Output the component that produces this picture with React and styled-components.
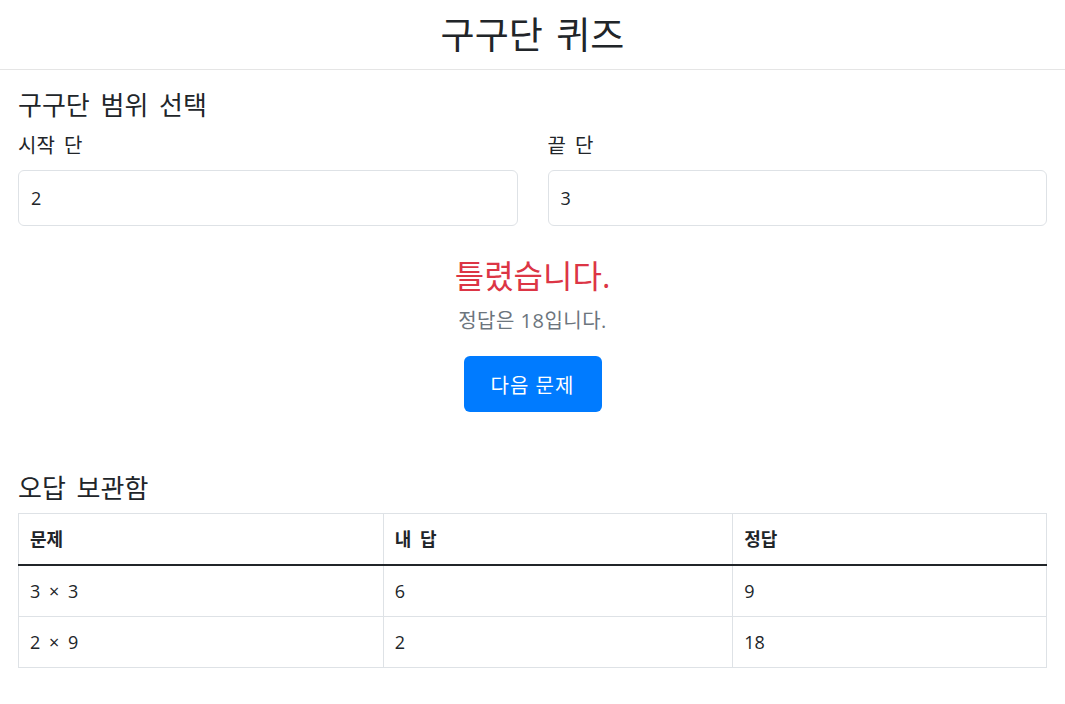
import React, { useState } from "react"
import styled, { createGlobalStyle } from "styled-components"

const GlobalStyle = createGlobalStyle`
  body {
    margin: 0;
    background: #fff;
    color: #212529;
    font-family: "Open Sans", "Noto Sans CJK KR", sans-serif;
    word-spacing: 0.25em;
  }
  * { box-sizing: border-box; }
`

const Header = styled.header`
  height: 70px;
  border-bottom: 1px solid #e5e5e5;
  display: flex;
  align-items: center;
  justify-content: center;
`
const Title = styled.h1`
  margin: 0;
  font-size: 37px;
  font-weight: 400;
  line-height: 40px;
`
const Main = styled.main`
  padding: 0 18px;
  display: flex;
  flex-direction: column;
`
const SectionTitle = styled.h2`
  margin: ${(p) => p.$top || 20}px 0 0;
  font-size: 26px;
  font-weight: 400;
  line-height: 30px;
`
const RangeGrid = styled.div`
  display: grid;
  grid-template-columns: 1fr 1fr;
  column-gap: 30px;
  margin-top: 12px;
`
const Field = styled.label`
  display: flex;
  flex-direction: column;
  gap: 10px;
  font-size: 20px;
  line-height: 28px;
`
const Input = styled.input`
  height: 56px;
  padding: 0 12px;
  border: 1px solid #dee2e6;
  border-radius: 6px;
  font: inherit;
  font-size: 18px;
  color: #212529;
  outline: none;
`
const Feedback = styled.div`
  display: flex;
  flex-direction: column;
  align-items: center;
  margin-top: 32px;
`
const Verdict = styled.div`
  font-size: 32px;
  line-height: 36px;
  color: #dc3545;
`
const Answer = styled.div`
  margin-top: 13px;
  font-size: 20px;
  line-height: 27px;
  letter-spacing: 0.5px;
  word-spacing: normal;
  color: #6c757d;
`
const NextButton = styled.button`
  margin-top: 22px;
  width: 138px;
  height: 56px;
  border: none;
  border-radius: 6px;
  background: #007bff;
  color: #fff;
  font: inherit;
  font-size: 20px;
  letter-spacing: 1px;
  cursor: pointer;
`
const Table = styled.table`
  margin-top: 10px;
  width: 100%;
  border-collapse: collapse;
  font-size: 18px;
  line-height: 26px;
`
const Th = styled.th`
  width: ${(p) => p.$w}px;
  text-align: left;
  font-weight: 700;
  padding: 12px 11px;
  border: 1px solid #dee2e6;
  border-bottom: 2px solid #212529;
`
const Td = styled.td`
  padding: 12px 11px;
  border: 1px solid #dee2e6;
`

const wrongs = [
  { q: "3 × 3", mine: 6, answer: 9 },
  { q: "2 × 9", mine: 2, answer: 18 },
]

const App = () => {
  const [start, setStart] = useState("2")
  const [end, setEnd] = useState("3")
  return (
    <>
      <GlobalStyle />
      <Header>
        <Title>구구단 퀴즈</Title>
      </Header>
      <Main>
        <SectionTitle>구구단 범위 선택</SectionTitle>
        <RangeGrid>
          <Field>
            시작 단
            <Input value={start} onChange={(e) => setStart(e.target.value)} />
          </Field>
          <Field>
            끝 단
            <Input value={end} onChange={(e) => setEnd(e.target.value)} />
          </Field>
        </RangeGrid>
        <Feedback>
          <Verdict>틀렸습니다.</Verdict>
          <Answer>정답은 18입니다.</Answer>
          <NextButton>다음 문제</NextButton>
        </Feedback>
        <SectionTitle $top={61}>오답 보관함</SectionTitle>
        <Table>
          <thead>
            <tr>
              <Th $w={365}>문제</Th>
              <Th $w={350}>내 답</Th>
              <Th $w={314}>정답</Th>
            </tr>
          </thead>
          <tbody>
            {wrongs.map((w) => (
              <tr key={w.q}>
                <Td>{w.q}</Td>
                <Td>{w.mine}</Td>
                <Td>{w.answer}</Td>
              </tr>
            ))}
          </tbody>
        </Table>
      </Main>
    </>
  )
}
export default App
